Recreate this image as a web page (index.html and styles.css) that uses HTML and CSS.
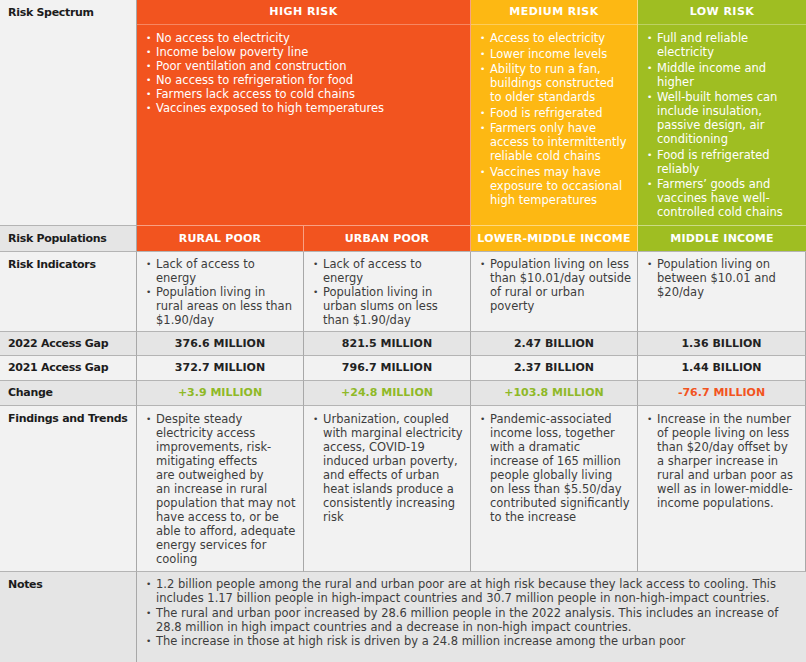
FILE: index.html
```html
<!DOCTYPE html>
<html>
<head>
<meta charset="utf-8">
<link rel="stylesheet" href="styles.css">
</head>
<body>
<div class="table">
  <div class="cell label light">Risk Spectrum</div>
  <div class="cell spectrum high span2">
    <div class="spec-title">HIGH RISK</div>
    <ul class="list">
      <li>No access to electricity</li>
      <li>Income below poverty line</li>
      <li>Poor ventilation and construction</li>
      <li>No access to refrigeration for food</li>
      <li>Farmers lack access to cold chains</li>
      <li>Vaccines exposed to high temperatures</li>
    </ul>
  </div>
  <div class="cell spectrum medium">
    <div class="spec-title">MEDIUM RISK</div>
    <ul class="list spaced">
      <li>Access to electricity</li>
      <li>Lower income levels</li>
      <li>Ability to run a fan,<br>buildings constructed<br>to older standards</li>
      <li>Food is refrigerated</li>
      <li>Farmers only have<br>access to intermittently<br>reliable cold chains</li>
      <li>Vaccines may have<br>exposure to occasional<br>high temperatures</li>
    </ul>
  </div>
  <div class="cell spectrum low">
    <div class="spec-title">LOW RISK</div>
    <ul class="list spaced">
      <li>Full and reliable<br>electricity</li>
      <li>Middle income and<br>higher</li>
      <li>Well-built homes can<br>include insulation,<br>passive design, air<br>conditioning</li>
      <li>Food is refrigerated<br>reliably</li>
      <li>Farmers’ goods and<br>vaccines have well-<br>controlled cold chains</li>
    </ul>
  </div>

  <div class="cell label dark">Risk Populations</div>
  <div class="cell pop high">RURAL POOR</div>
  <div class="cell pop high">URBAN POOR</div>
  <div class="cell pop medium">LOWER-MIDDLE INCOME</div>
  <div class="cell pop low">MIDDLE INCOME</div>

  <div class="cell label light">Risk Indicators</div>
  <div class="cell body light"><ul class="list"><li>Lack of access to<br>energy</li><li>Population living in<br>rural areas on less than<br>$1.90/day</li></ul></div>
  <div class="cell body light"><ul class="list"><li>Lack of access to<br>energy</li><li>Population living in<br>urban slums on less<br>than $1.90/day</li></ul></div>
  <div class="cell body light"><ul class="list"><li>Population living on less<br>than $10.01/day outside<br>of rural or urban<br>poverty</li></ul></div>
  <div class="cell body light"><ul class="list"><li>Population living on<br>between $10.01 and<br>$20/day</li></ul></div>

  <div class="cell label mid dark">2022 Access Gap</div>
  <div class="cell num dark">376.6 MILLION</div>
  <div class="cell num dark">821.5 MILLION</div>
  <div class="cell num dark">2.47 BILLION</div>
  <div class="cell num dark">1.36 BILLION</div>

  <div class="cell label mid light">2021 Access Gap</div>
  <div class="cell num light">372.7 MILLION</div>
  <div class="cell num light">796.7 MILLION</div>
  <div class="cell num light">2.37 BILLION</div>
  <div class="cell num light">1.44 BILLION</div>

  <div class="cell label mid dark">Change</div>
  <div class="cell num dark up">+3.9 MILLION</div>
  <div class="cell num dark up">+24.8 MILLION</div>
  <div class="cell num dark up">+103.8 MILLION</div>
  <div class="cell num dark down">-76.7 MILLION</div>

  <div class="cell label light">Findings and Trends</div>
  <div class="cell body light"><ul class="list findings"><li>Despite steady<br>electricity access<br>improvements, risk-<br>mitigating effects<br>are outweighed by<br>an increase in rural<br>population that may not<br>have access to, or be<br>able to afford, adequate<br>energy services for<br>cooling</li></ul></div>
  <div class="cell body light"><ul class="list findings"><li>Urbanization, coupled<br>with marginal electricity<br>access, COVID-19<br>induced urban poverty,<br>and effects of urban<br>heat islands produce a<br>consistently increasing<br>risk</li></ul></div>
  <div class="cell body light"><ul class="list findings"><li>Pandemic-associated<br>income loss, together<br>with a dramatic<br>increase of 165 million<br>people globally living<br>on less than $5.50/day<br>contributed significantly<br>to the increase</li></ul></div>
  <div class="cell body light"><ul class="list findings"><li>Increase in the number<br>of people living on less<br>than $20/day offset by<br>a sharper increase in<br>rural and urban poor as<br>well as in lower-middle-<br>income populations.</li></ul></div>

  <div class="cell label dark last">Notes</div>
  <div class="cell body dark span4 last">
    <ul class="list notes">
      <li>1.2 billion people among the rural and urban poor are at high risk because they lack access to cooling. This<br>includes 1.17 billion people in high-impact countries and 30.7 million people in non-high-impact countries.</li>
      <li>The rural and urban poor increased by 28.6 million people in the 2022 analysis. This includes an increase of<br>28.8 million in high impact countries and a decrease in non-high impact countries.</li>
      <li>The increase in those at high risk is driven by a 24.8 million increase among the urban poor</li>
    </ul>
  </div>
</div>
</body>
</html>
```
FILE: styles.css
```css
* { box-sizing: border-box; }
html, body { margin: 0; padding: 0; background: #ffffff; }
body {
  font-family: "DejaVu Sans", sans-serif;
  font-size: 11.5px;
  line-height: 14px;
  color: #3d3d3d;
}
.table {
  display: grid;
  grid-template-columns: 137px 167px 167px 167px 168px;
  grid-template-rows: 226px 26px 80px 24px 25px 25px 166px 90px;
  width: 806px;
  height: 662px;
}
.cell {
  border-right: 1px solid #a8a8a8;
  border-bottom: 1px solid #b4b4b4;
}
.span2 { grid-column: span 2; }
.span4 { grid-column: span 4; }
.light { background: #f2f2f2; }
.dark { background: #e5e5e5; }
.label {
  font-weight: bold;
  font-size: 11px;
  color: #1c1c1c;
  padding: 6px 0 0 8px;
  letter-spacing: -0.3px;
}
.label.mid { display: flex; align-items: center; padding-top: 0; }
.high { background: #f2541f; }
.medium { background: #fdb813; }
.low { background: #9fbe22; }
.spectrum {
  display: flex;
  flex-direction: column;
  color: #ffffff;
  border-right: 1px solid rgba(255, 255, 255, 0.45);
  border-bottom: 1px solid rgba(255, 255, 255, 0.45);
}
.spec-title {
  height: 25px;
  flex: 0 0 25px;
  display: flex;
  align-items: center;
  justify-content: center;
  font-weight: bold;
  font-size: 11px;
  letter-spacing: 0.45px;
  border-bottom: 1px solid rgba(255, 255, 255, 0.3);
}
.list {
  list-style: none;
  margin: 0;
  padding: 5px 4px 0 9px;
}
.list li {
  display: flex;
  white-space: nowrap;
}
.list li::before {
  content: "•";
  flex: 0 0 10px;
  font-size: 9px;
}
.list.spaced li + li { margin-top: 1.5px; }
.spectrum .list { padding-top: 6px; }
.list.findings { padding-top: 6px; }
.list.notes li { white-space: nowrap; line-height: 14.3px; }
.list.notes { padding-top: 5px; }
.pop {
  display: flex;
  align-items: center;
  justify-content: center;
  color: #ffffff;
  font-weight: bold;
  font-size: 11px;
  letter-spacing: 0.2px;
  border-right: 1px solid rgba(255, 255, 255, 0.45);
  border-bottom: 1px solid #b4b4b4;
}
.body { color: #3d3d3d; }
.num {
  display: flex;
  align-items: center;
  justify-content: center;
  font-weight: bold;
  font-size: 11px;
  color: #222222;
}
.num.up { color: #8fb928; }
.num.down { color: #f2541f; }
.last { border-bottom: none; }
.span4 { border-right: none; }
.low { border-right: none; }
.num:nth-child(5n), .body:nth-child(5n) { border-right: none; }
```
